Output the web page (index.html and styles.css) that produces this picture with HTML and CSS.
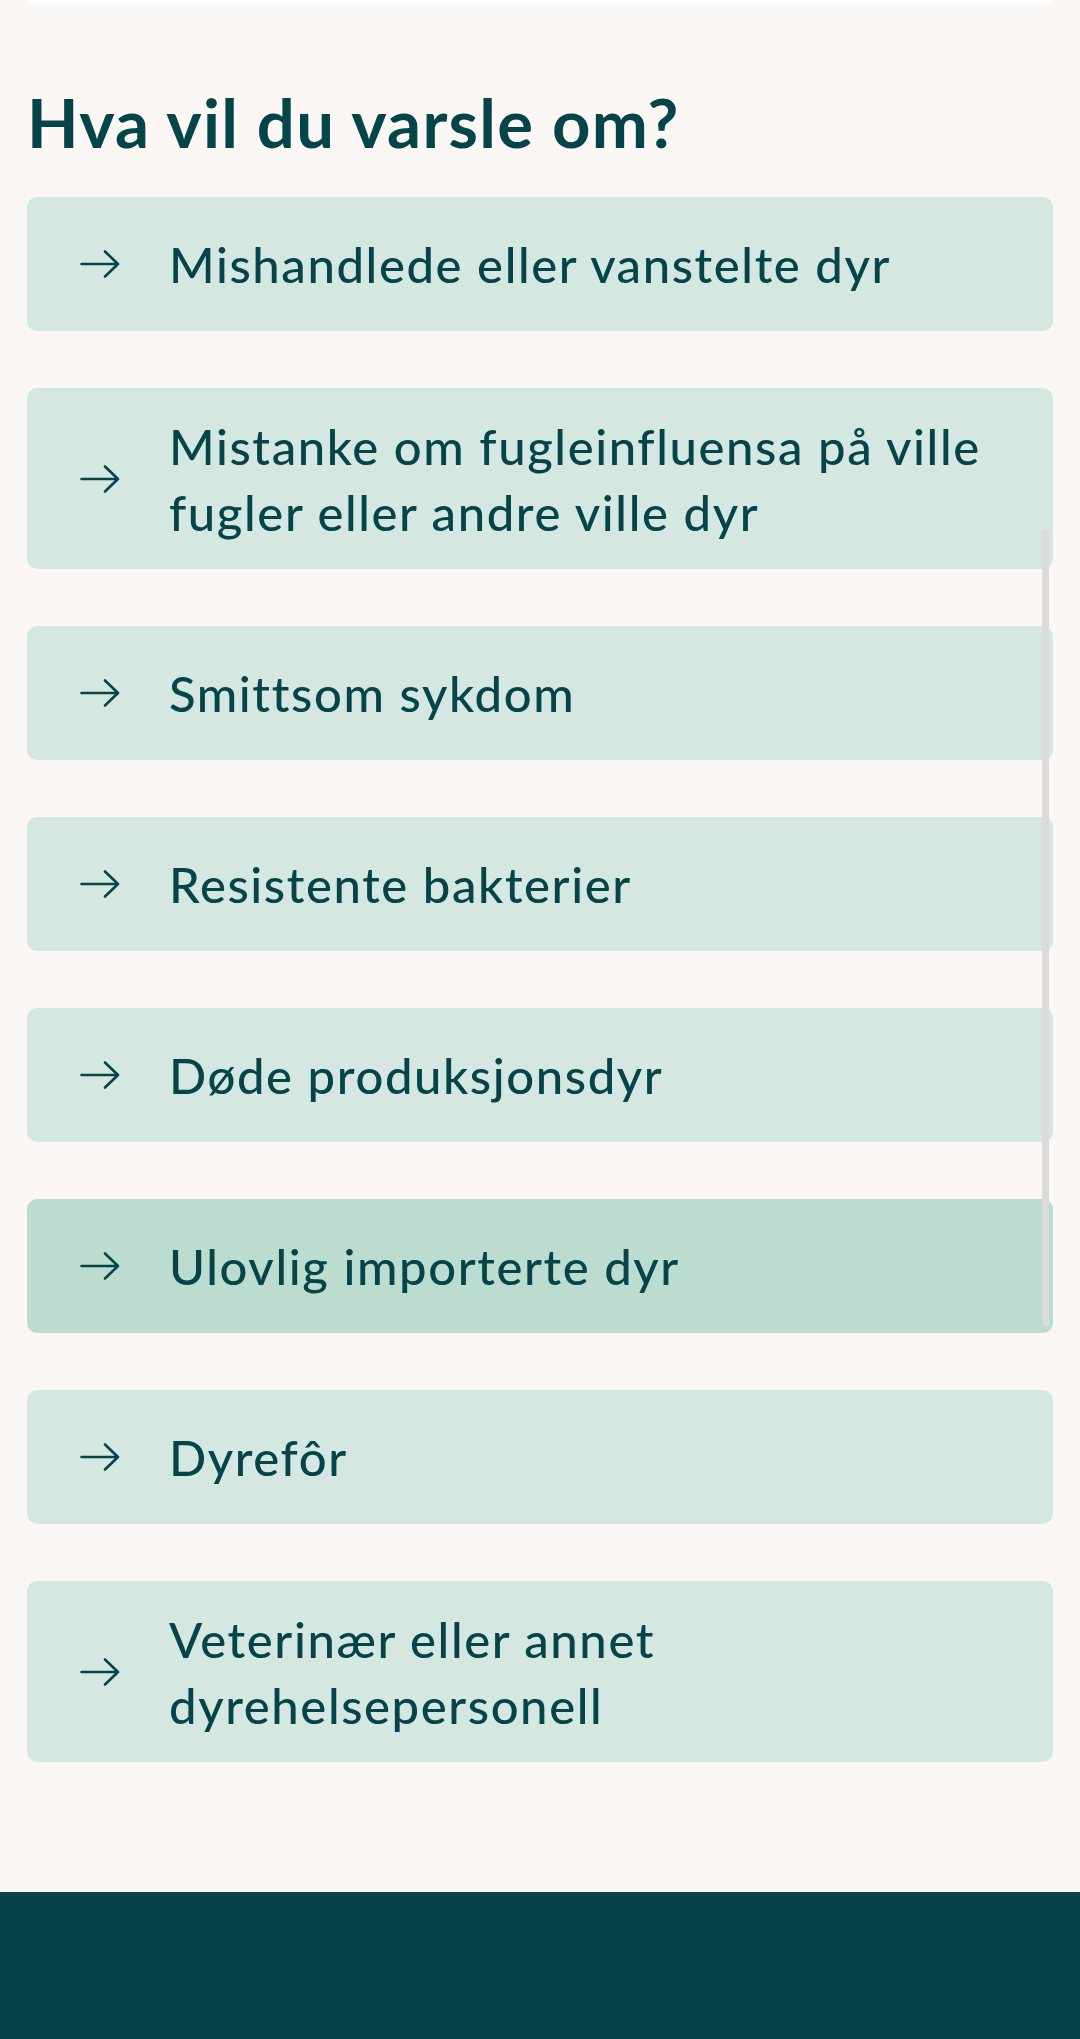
FILE: index.html
```html
<!DOCTYPE html>
<html lang="no">
<head>
<meta charset="utf-8">
<title>Hva vil du varsle om?</title>
<link rel="stylesheet" href="styles.css">
</head>
<body>
<div class="top-strip"></div>
<main class="content">
  <h1 class="title">Hva vil du varsle om?</h1>
  <ul class="choices">
    <li><a class="choice" href="#"><svg class="arrow" viewBox="0 0 40 28"><path d="M1.5 14H38M25 1.5L38 14L25 26.5"/></svg><span class="label">Mishandlede eller vanstelte dyr</span></a></li>
    <li><a class="choice" href="#"><svg class="arrow" viewBox="0 0 40 28"><path d="M1.5 14H38M25 1.5L38 14L25 26.5"/></svg><span class="label">Mistanke om fugleinfluensa på ville fugler eller andre ville dyr</span></a></li>
    <li><a class="choice" href="#"><svg class="arrow" viewBox="0 0 40 28"><path d="M1.5 14H38M25 1.5L38 14L25 26.5"/></svg><span class="label">Smittsom sykdom</span></a></li>
    <li><a class="choice" href="#"><svg class="arrow" viewBox="0 0 40 28"><path d="M1.5 14H38M25 1.5L38 14L25 26.5"/></svg><span class="label">Resistente bakterier</span></a></li>
    <li><a class="choice" href="#"><svg class="arrow" viewBox="0 0 40 28"><path d="M1.5 14H38M25 1.5L38 14L25 26.5"/></svg><span class="label">Døde produksjonsdyr</span></a></li>
    <li><a class="choice choice-active" href="#"><svg class="arrow" viewBox="0 0 40 28"><path d="M1.5 14H38M25 1.5L38 14L25 26.5"/></svg><span class="label">Ulovlig importerte dyr</span></a></li>
    <li><a class="choice" href="#"><svg class="arrow" viewBox="0 0 40 28"><path d="M1.5 14H38M25 1.5L38 14L25 26.5"/></svg><span class="label">Dyrefôr</span></a></li>
    <li><a class="choice" href="#"><svg class="arrow" viewBox="0 0 40 28"><path d="M1.5 14H38M25 1.5L38 14L25 26.5"/></svg><span class="label">Veterinær eller annet dyrehelsepersonell</span></a></li>
  </ul>
</main>
<footer class="footer"></footer>
<div class="scrollbar"></div>
</body>
</html>
```

FILE: styles.css
```css
html, body {
  margin: 0;
  padding: 0;
}
body {
  background: #faf7f4;
  color: #054449;
  font-family: Lato, "Open Sans", "Liberation Sans", sans-serif;
  min-height: 2039px;
  display: flex;
  flex-direction: column;
  position: relative;
}
.top-strip {
  height: 4px;
  margin: 0 27px;
  background: #ffffff;
  border-radius: 0 0 8px 8px;
}
.content {
  padding: 0 27px;
}
.title {
  margin: 78px 0 35px;
  font-size: 67px;
  line-height: 80px;
  font-weight: 700;
  letter-spacing: 1.3px;
}
.choices {
  list-style: none;
  margin: 0;
  padding: 0;
  display: flex;
  flex-direction: column;
  gap: 57px;
}
.choice {
  display: flex;
  align-items: center;
  gap: 49px;
  box-sizing: border-box;
  min-height: 134px;
  padding: 24.5px 40px 24.5px 53px;
  background: #d4e8e1;
  border-radius: 10px;
  color: #054449;
  text-decoration: none;
}
.choice-active {
  background: #bddcd0;
}
.arrow {
  flex: 0 0 40px;
  width: 40px;
  height: 28px;
  fill: none;
  stroke: #054449;
  stroke-width: 2.6;
  stroke-linecap: round;
  stroke-linejoin: round;
}
.label {
  font-size: 49px;
  line-height: 66px;
  font-weight: 500;
  letter-spacing: 1.6px;
}
.footer {
  margin-top: 130px;
  flex: 1 0 147px;
  background: #06434b;
}
.scrollbar {
  position: absolute;
  left: 1042px;
  top: 530px;
  width: 7px;
  height: 796px;
  border-radius: 4px;
  background: #dcdbdb;
}
```
